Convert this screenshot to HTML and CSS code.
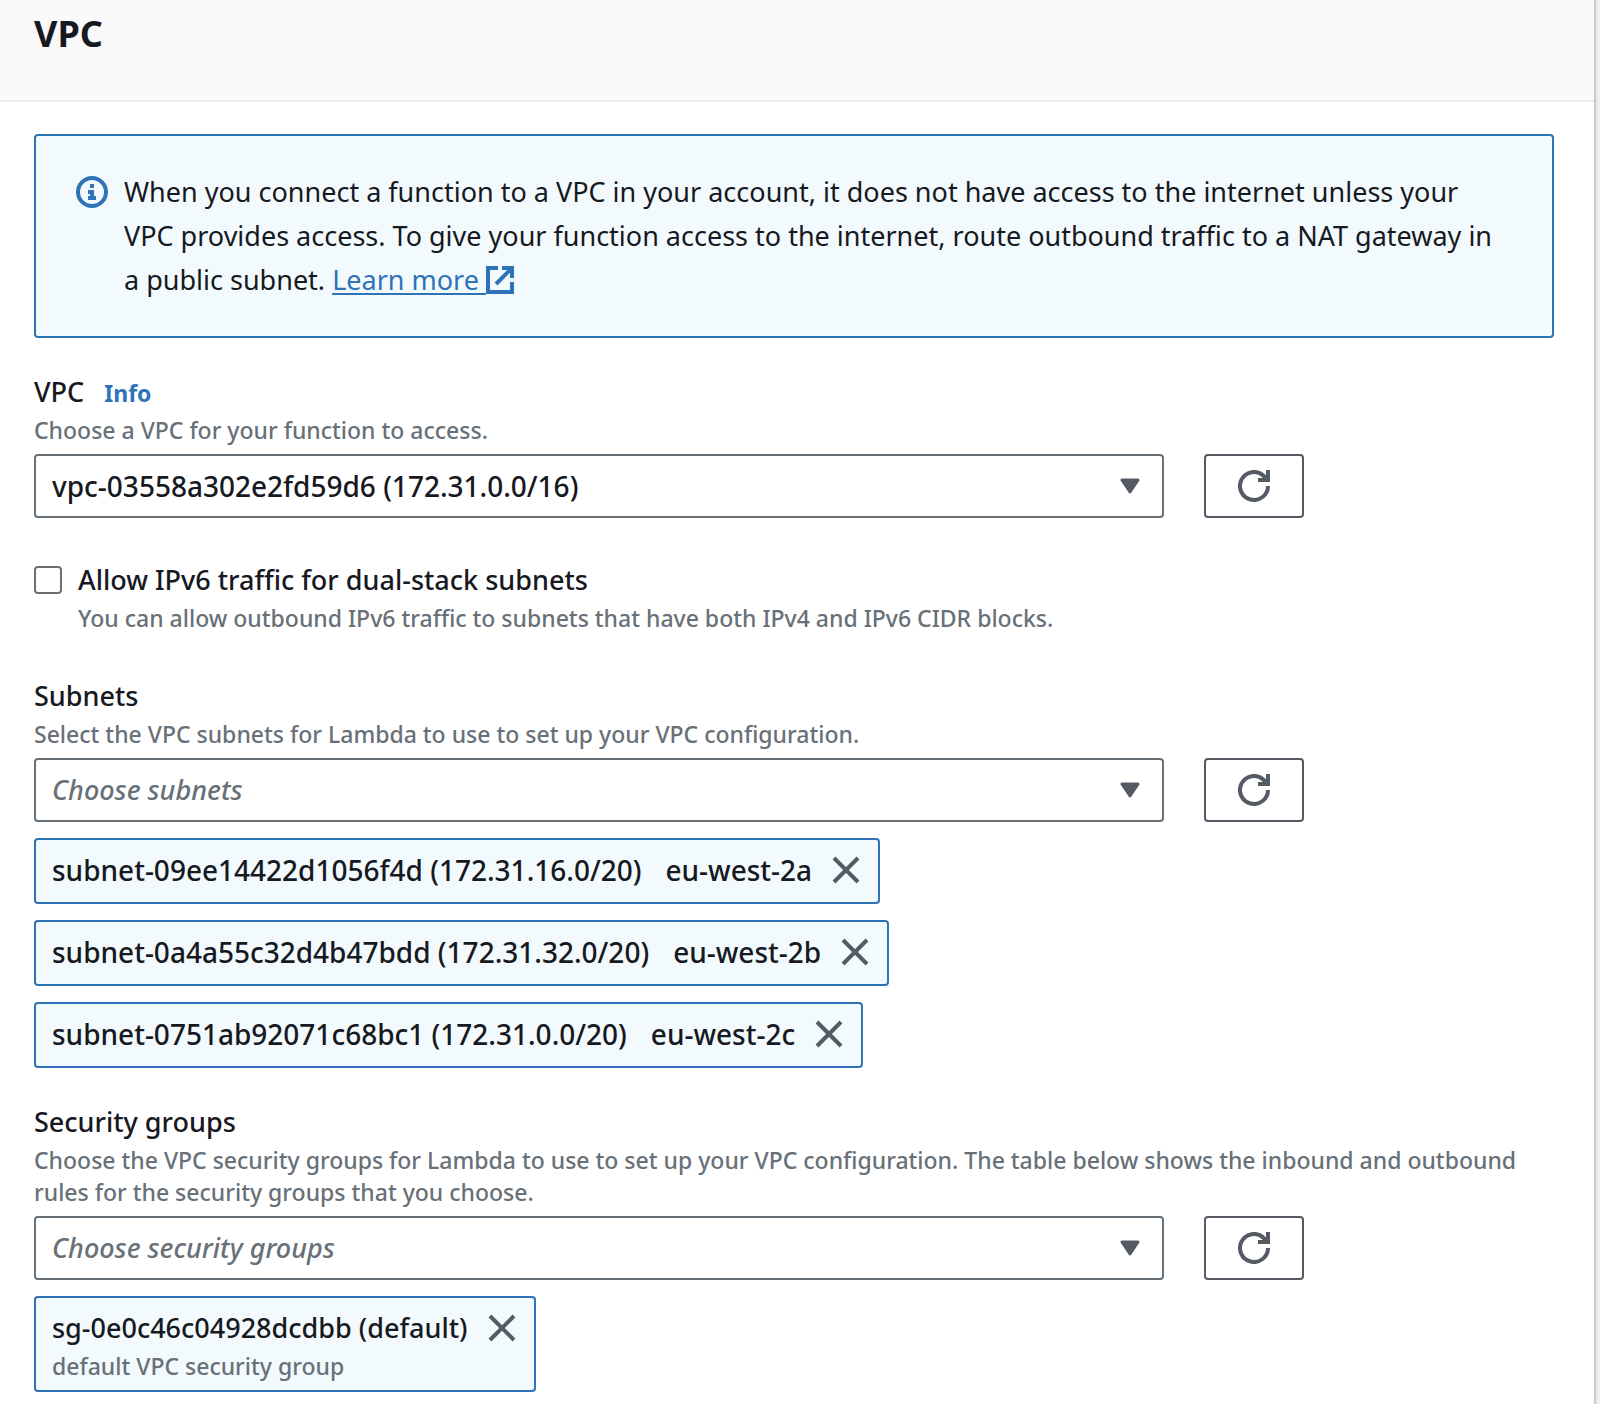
FILE: index.html
```html
<!DOCTYPE html>
<html lang="en">
<head>
<meta charset="utf-8">
<meta name="viewport" content="width=device-width, initial-scale=1">
<title>VPC</title>
<link rel="stylesheet" href="styles.css">
</head>
<body>
<svg class="sprite" aria-hidden="true">
  <symbol id="refresh" viewBox="0 0 32 32">
    <path d="M30 16a14 14 0 1 1-4.500-10.300L29 10" fill="none" stroke="currentColor" stroke-width="4"/>
    <path d="M30 0v10H20" fill="none" stroke="currentColor" stroke-width="4"/>
  </symbol>
  <symbol id="close" viewBox="0 0 28 28">
    <path d="M2 2l24 24M26 2L2 26" fill="none" stroke="currentColor" stroke-width="4"/>
  </symbol>
  <symbol id="caret" viewBox="0 0 20 16">
    <path d="M2 2h16l-8 12z" fill="currentColor" stroke="currentColor" stroke-width="3" stroke-linejoin="round"/>
  </symbol>
</svg>
<main class="panel">
  <header class="panel-header">
    <h1>VPC</h1>
  </header>
  <form class="panel-body">
    <div class="alert">
      <svg class="alert-icon" viewBox="0 0 32 32" aria-hidden="true">
        <circle cx="16" cy="16" r="14" fill="none" stroke="currentColor" stroke-width="4"/>
        <path d="M14 8h4v4h-4zM12 14h6v6h2v4h-8v-4h2v-2h-2z" fill="currentColor"/>
      </svg>
      <p>When you connect a function to a VPC in your account, it does not have access to the internet unless your VPC provides access. To give your function access to the internet, route outbound traffic to a NAT gateway in a public subnet. <a class="learn" href="#">Learn more <svg class="external" viewBox="0 0 28 28" aria-hidden="true"><path d="M12 2H2v24h24V16M16 2h10v10M26 2L10 18" fill="none" stroke="currentColor" stroke-width="4"/></svg></a></p>
    </div>

    <section class="field">
      <div class="label-row"><label for="vpc">VPC</label><a class="info" href="#">Info</a></div>
      <p class="hint">Choose a VPC for your function to access.</p>
      <div class="control-row">
        <div class="select">
          <select id="vpc"><option>vpc-03558a302e2fd59d6 (172.31.0.0/16)</option></select>
          <svg class="caret" aria-hidden="true"><use href="#caret"/></svg>
        </div>
        <button class="refresh" type="button" aria-label="Refresh VPCs"><svg><use href="#refresh"/></svg></button>
      </div>
    </section>

    <section class="field check">
      <input id="ipv6" type="checkbox">
      <div>
        <label for="ipv6">Allow IPv6 traffic for dual-stack subnets</label>
        <p class="hint">You can allow outbound IPv6 traffic to subnets that have both IPv4 and IPv6 CIDR blocks.</p>
      </div>
    </section>

    <section class="field">
      <div class="label-row"><label for="subnets">Subnets</label></div>
      <p class="hint">Select the VPC subnets for Lambda to use to set up your VPC configuration.</p>
      <div class="control-row">
        <div class="select">
          <select id="subnets" class="empty"><option>Choose subnets</option></select>
          <svg class="caret" aria-hidden="true"><use href="#caret"/></svg>
        </div>
        <button class="refresh" type="button" aria-label="Refresh subnets"><svg><use href="#refresh"/></svg></button>
      </div>
      <ul class="tokens">
        <li class="token"><span>subnet-09ee14422d1056f4d (172.31.16.0/20)</span><span class="zone">eu-west-2a</span><button type="button" aria-label="Remove eu-west-2a subnet"><svg><use href="#close"/></svg></button></li>
        <li class="token"><span>subnet-0a4a55c32d4b47bdd (172.31.32.0/20)</span><span class="zone">eu-west-2b</span><button type="button" aria-label="Remove eu-west-2b subnet"><svg><use href="#close"/></svg></button></li>
        <li class="token"><span>subnet-0751ab92071c68bc1 (172.31.0.0/20)</span><span class="zone">eu-west-2c</span><button type="button" aria-label="Remove eu-west-2c subnet"><svg><use href="#close"/></svg></button></li>
      </ul>
    </section>

    <section class="field groups">
      <div class="label-row"><label for="groups">Security groups</label></div>
      <p class="hint">Choose the VPC security groups for Lambda to use to set up your VPC configuration. The table below shows the inbound and outbound rules for the security groups that you choose.</p>
      <div class="control-row">
        <div class="select">
          <select id="groups" class="empty"><option>Choose security groups</option></select>
          <svg class="caret" aria-hidden="true"><use href="#caret"/></svg>
        </div>
        <button class="refresh" type="button" aria-label="Refresh security groups"><svg><use href="#refresh"/></svg></button>
      </div>
      <ul class="tokens">
        <li class="token detailed"><div><span>sg-0e0c46c04928dcdbb (default)</span><p class="hint">default VPC security group</p></div><button type="button" aria-label="Remove default security group"><svg><use href="#close"/></svg></button></li>
      </ul>
    </section>
  </form>
</main>
</body>
</html>
```
FILE: styles.css
```css
:root {
  --text: #16191f;
  --muted: #687078;
  --icon: #545b64;
  --blue: #2e73b8;
  --tint: #f2fafd;
}

* { box-sizing: border-box; }

body {
  margin: 0;
  padding-right: 5px;
  background: #f0f0f1;
  color: var(--text);
  font: 500 27px/44px "Noto Sans", "Open Sans", sans-serif;
}

h1, p, ul { margin: 0; padding: 0; }

.sprite { display: none; }

.panel {
  min-height: 100vh;
  background: #fff;
  border-right: 1px solid #c3c7ca;
  box-shadow: 1px 0 2px #c3c7ca;
}

.panel-header {
  padding: 10px 40px 42px 34px;
  background: #fafafa;
  border-bottom: 2px solid #ececed;
}

h1 { font-size: 36px; line-height: 48px; font-weight: 700; }

.panel-body { padding: 32px 40px 12px 34px; }

.alert {
  display: flex;
  gap: 16px;
  padding: 34px 38px 34px 40px;
  background: var(--tint);
  border: 2px solid var(--blue);
  border-radius: 4px;
  font-weight: 400;
}

.alert-icon {
  flex: none;
  width: 32px;
  height: 32px;
  margin-top: 6px;
  color: var(--blue);
}

a { color: var(--blue); }

.learn {
  white-space: nowrap;
  text-decoration-thickness: 2px;
  text-underline-offset: 3px;
}

.external {
  width: 28px;
  height: 28px;
  vertical-align: -4px;
}

.field { margin-top: 40px; }
.alert + .field, .groups { margin-top: 32px; }

.label-row { display: flex; align-items: baseline; gap: 20px; }

label { display: block; }

.info {
  font-size: 23px;
  font-weight: 700;
  line-height: 32px;
  text-decoration: none;
}

.hint { color: var(--muted); font-size: 23px; line-height: 32px; }

.groups > .hint { padding-right: 24px; }

.control-row {
  display: grid;
  grid-template-columns: repeat(12, 1fr);
  gap: 40px;
  margin-top: 8px;
}

.select { grid-column: span 9; position: relative; }

select {
  display: block;
  appearance: none;
  width: 100%;
  height: 64px;
  padding: 0 64px 0 16px;
  background: #fff;
  border: 2px solid var(--muted);
  border-radius: 4px;
  color: var(--text);
  font: inherit;
  font-size: 28px;
}

select.empty { color: var(--muted); font-size: 27px; font-style: italic; }

.caret {
  position: absolute;
  top: 24px;
  right: 24px;
  width: 20px;
  height: 16px;
  color: var(--icon);
  pointer-events: none;
}

.refresh {
  grid-column: span 3;
  display: grid;
  place-items: center;
  width: 100px;
  height: 64px;
  padding: 0;
  background: #fff;
  border: 2px solid var(--icon);
  border-radius: 4px;
  color: var(--icon);
}

.refresh svg { width: 32px; height: 32px; }

.check { display: flex; gap: 16px; }

input[type="checkbox"] {
  appearance: none;
  flex: none;
  width: 28px;
  height: 28px;
  margin: 8px 0 0;
  background: #fff;
  border: 2px solid var(--muted);
  border-radius: 4px;
}

.tokens {
  display: flex;
  flex-direction: column;
  align-items: flex-start;
  gap: 16px;
  margin-top: 16px;
  list-style: none;
}

.token {
  display: flex;
  align-items: flex-start;
  min-height: 66px;
  padding: 8px 18px 8px 16px;
  background: var(--tint);
  border: 2px solid var(--blue);
  border-radius: 4px;
  font-size: 28px;
}

.detailed { font-size: 27px; }

.zone { margin-left: 24px; }

.token button {
  display: grid;
  place-items: center;
  height: 44px;
  margin-left: 20px;
  padding: 0;
  background: none;
  border: 0;
  color: var(--icon);
}

.token svg { width: 28px; height: 28px; }
```
